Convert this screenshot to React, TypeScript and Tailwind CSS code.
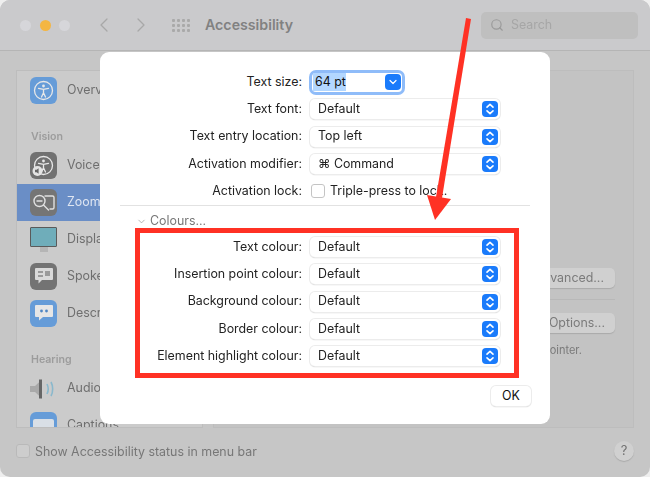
import React from 'react';
import { ChevronLeft, ChevronRight, ChevronDown, Search } from 'lucide-react';

const UpDown = () => (
  <svg width="16" height="16" viewBox="0 0 16 16" fill="none" stroke="white" strokeWidth="1.6" strokeLinecap="round" strokeLinejoin="round">
    <path d="M5 6.2 8 3.4l3 2.8" />
    <path d="M5 9.8l3 2.8 3-2.8" />
  </svg>
);

const Select = ({ value }: { value: string }) => (
  <div className="w-[190px] h-[20px] flex items-center justify-between bg-white rounded-[5px] pl-2 pr-[2px] shadow-[0_0_0_1px_#ececec,0_1px_1px_#b0b0b0]">
    <span className="text-[12.4px] text-[#222]">{value}</span>
    <span className="w-[16px] h-[16px] rounded-[4px] bg-[#1a7bfb] flex items-center justify-center">
      <UpDown />
    </span>
  </div>
);

const Row = ({ label, children }: { label: string; children: React.ReactNode }) => (
  <div className="h-[27.3px] flex items-center">
    <div className="w-[210px] text-right text-[12.4px] text-[#222] pr-[8px] shrink-0">{label}</div>
    {children}
  </div>
);

const AppIcon = ({ bg, children }: { bg: string; children?: React.ReactNode }) => (
  <div className={`w-[27px] h-[27px] rounded-[6px] flex items-center justify-center shrink-0 ${bg}`}>{children}</div>
);

const PersonCircle = ({ badge }: { badge?: boolean }) => (
  <svg width="23" height="23" viewBox="0 0 23 23" fill="none" stroke="#e8e8e8" strokeWidth="1.3" strokeLinecap="round">
    <circle cx="11.5" cy="11.5" r="9" />
    <circle cx="11.5" cy="7" r="1.4" fill="#e8e8e8" stroke="none" />
    <path d="M6.5 9.3l5 1 5-1M11.5 10.3v3.5M11.5 13.8l-2 4.2M11.5 13.8l2 4.2" />
    {badge && (
      <g>
        <circle cx="5.5" cy="17" r="5" fill="#e4e4e4" stroke="none" />
        <path d="M3 15.8h1.6l2-1.6v5.6l-2-1.6H3z" fill="#666" stroke="none" />
      </g>
    )}
  </svg>
);

const SideItem = ({ icon, label, active }: { icon: React.ReactNode; label: string; active?: boolean }) => (
  <div className={`h-[37px] flex items-center pl-[13px] gap-[10px] ${active ? 'bg-[#6a8ec6]' : ''}`}>
    {icon}
    <span className={`text-[12.4px] ${active ? 'text-[#dfe6f2]' : 'text-[#6e6e6e]'}`}>{label}</span>
  </div>
);

const SideHeading = ({ label }: { label: string }) => (
  <div className="h-[20px] pl-[14px] flex items-center text-[10.6px] font-semibold text-[#9c9c9c]">{label}</div>
);

export default function App() {
  return (
    <div className="relative w-[650px] h-[477px] bg-[#efefef] overflow-hidden font-['Inter','Liberation_Sans',sans-serif]">
      <div className="w-full h-full blur-[0.35px]">
        {/* window behind the sheet */}
        <div className="w-full h-full bg-[#c6c6c6] rounded-[10px] overflow-hidden flex flex-col">
          <div className="h-[51px] shrink-0 bg-[#cacacc] border-b border-[#b5b5b5] flex items-center pl-[20px] pr-[12px]">
            <div className="flex gap-[8.5px]">
              <span className="w-[11px] h-[11px] rounded-full bg-[#d6d6da]" />
              <span className="w-[11px] h-[11px] rounded-full bg-[#f4b642]" />
              <span className="w-[11px] h-[11px] rounded-full bg-[#d6d6da]" />
            </div>
            <ChevronLeft className="ml-[22px] text-[#a8a8a8]" size={24} strokeWidth={1.3} />
            <ChevronRight className="ml-[13px] text-[#a8a8a8]" size={24} strokeWidth={1.3} />
            <div className="ml-[19px] grid grid-cols-4 gap-[2px]">
              {Array.from({ length: 12 }).map((_, i) => (
                <span key={i} className="w-[3px] h-[3px] bg-[#a9a9a9] rounded-[1px]" />
              ))}
            </div>
            <span className="ml-[15px] text-[14.2px] font-semibold text-[#818181]">Accessibility</span>
            <div className="ml-auto w-[157px] h-[27px] rounded-[5px] bg-[#bfbfbf] flex items-center pl-[9px] gap-[7px]">
              <Search size={14} className="text-[#9a9a9a]" />
              <span className="text-[12.4px] text-[#a6a6a6]">Search</span>
            </div>
          </div>

          <div className="flex-1 flex gap-[10px] px-[16px] pt-[19px] min-h-0">
            <div className="w-[187px] h-[358px] bg-[#cbcbcb] border border-[#bdbdbd] overflow-hidden shrink-0 pt-[1px]">
              <SideItem label="Overview" icon={<AppIcon bg="bg-[#669cd8]"><PersonCircle /></AppIcon>} />
              <div className="h-[37.5px] flex items-end"><div className="w-full"><SideHeading label="Vision" /></div></div>
              <SideItem label="VoiceOver" icon={<AppIcon bg="bg-[#717171]"><PersonCircle badge /></AppIcon>} />
              <SideItem
                active
                label="Zoom"
                icon={
                  <AppIcon bg="bg-[#757575]">
                    <svg width="23" height="19" viewBox="0 0 23 19" fill="none" stroke="#e0e0e0" strokeWidth="1.4" strokeLinecap="round">
                      <path d="M13 3h7.5a1.5 1.5 0 0 1 1.5 1.5v10a1.5 1.5 0 0 1-1.5 1.5H18" />
                      <circle cx="7.5" cy="8" r="5.5" />
                      <path d="M5 8h5M11.5 12l5 5" />
                    </svg>
                  </AppIcon>
                }
              />
              <SideItem
                label="Display"
                icon={
                  <div className="w-[27px] flex flex-col items-center shrink-0">
                    <div className="w-[27px] h-[20px] bg-[#6fadba] border border-[#5a5a5a] rounded-[1px]" />
                    <div className="w-[8px] h-[5px] bg-[#b5b5b5]" />
                  </div>
                }
              />
              <SideItem
                label="Spoken Content"
                icon={
                  <AppIcon bg="bg-[#737373]">
                    <svg width="20" height="18" viewBox="0 0 20 18" fill="#d9d9d9">
                      <path d="M2 1h16a1 1 0 0 1 1 1v10a1 1 0 0 1-1 1H8l-3.5 3.5V13H2a1 1 0 0 1-1-1V2a1 1 0 0 1 1-1z" />
                      <path d="M4 4h5v2H4zM11 4h5v5h-5zM4 8h5v2H4z" fill="#9a9a9a" />
                    </svg>
                  </AppIcon>
                }
              />
              <SideItem
                label="Descriptions"
                icon={
                  <AppIcon bg="bg-[#669cd8]">
                    <svg width="20" height="18" viewBox="0 0 20 18" fill="#e6e6e6">
                      <path d="M2 1h16a1 1 0 0 1 1 1v10a1 1 0 0 1-1 1H9l-4 3.5V13H2a1 1 0 0 1-1-1V2a1 1 0 0 1 1-1z" />
                      <circle cx="7.5" cy="7" r="1.4" fill="#4f86c4" />
                      <circle cx="12.5" cy="7" r="1.4" fill="#4f86c4" />
                    </svg>
                  </AppIcon>
                }
              />
              <div className="h-[38.5px] flex items-end"><div className="w-full"><SideHeading label="Hearing" /></div></div>
              <SideItem
                label="Audio"
                icon={
                  <svg width="27" height="24" viewBox="0 0 27 24" className="shrink-0">
                    <path d="M0 9h5l7-6.5v19L5 15H0z" fill="#a9a9a9" />
                    <path d="M9 2.5h3v19H9z" fill="#666" />
                    <path d="M17 7c1.5 3 1.5 7 0 10M21 5c2.2 4 2.2 10 0 14" fill="none" stroke="#8ab8cc" strokeWidth="1.6" />
                  </svg>
                }
              />
              <SideItem
                label="Captions"
                icon={
                  <AppIcon bg="bg-[#669cd8]">
                    <div className="w-[21px] h-[17px] mt-[4px] rounded-[2px] bg-[#d9dfe6]" />
                  </AppIcon>
                }
              />
            </div>

            <div className="flex-1 h-[358px] bg-[#c3c3c3] border border-[#bdbdbd] flex flex-col items-end pr-[18px] pt-[197px]">
              <div className="h-[20px] w-[90px] rounded-[5px] bg-[#d0d0d0] shadow-[0_1px_1px_#aaaaaa] text-[12.4px] text-[#7a7a7a] flex items-center justify-end pr-[11px]">Advanced...</div>
              <div className="w-full h-px bg-[#b8b8b8] mt-[11px]" />
              <div className="h-[20px] w-[90px] rounded-[5px] bg-[#d0d0d0] shadow-[0_1px_1px_#aaaaaa] text-[12.4px] text-[#7a7a7a] flex items-center justify-end pr-[10px] mt-[13px]">Options...</div>
              <div className="text-[11px] text-[#7a7a7a] mt-[9px] pr-[33px]">pointer.</div>
            </div>
          </div>

          <div className="h-[49px] shrink-0 flex items-start pl-[16px] pr-[16px] gap-[5px]">
            <span className="w-[14px] h-[14px] mt-[16px] rounded-[3px] bg-[#cdcdcd] border border-[#b9b9b9]" />
            <span className="text-[12.4px] text-[#777] mt-[15px]">Show Accessibility status in menu bar</span>
            <span className="ml-auto mt-[13px] w-[20px] h-[20px] rounded-full bg-[#d0d0d0] shadow-[0_1px_1px_#aaaaaa] text-[13px] text-[#707070] flex items-center justify-center">?</span>
          </div>
        </div>

        {/* sheet */}
        <div className="absolute left-[100px] top-[52px] w-[450px] h-[372px] bg-white rounded-[9px] pt-[16.5px]">
          <Row label="Text size:">
            <div className="w-[90px] h-[19px] ml-[2px] flex items-center justify-between bg-white rounded-[4px] pr-[1px] shadow-[0_0_0_3px_#8fbcf9]">
              <span className="text-[12.4px] text-[#111] bg-[#b3d7ff] ml-[1px] pl-[2px] w-[33px] whitespace-nowrap">64 pt</span>
              <span className="w-[16px] h-[16px] rounded-[4px] bg-[#1a7bfb] flex items-center justify-center">
                <ChevronDown size={12} strokeWidth={2.4} className="text-white" />
              </span>
            </div>
          </Row>
          <Row label="Text font:"><Select value="Default" /></Row>
          <Row label="Text entry location:"><Select value="Top left" /></Row>
          <Row label="Activation modifier:"><Select value="⌘ Command" /></Row>
          <Row label="Activation lock:">
            <span className="w-[14px] h-[14px] ml-[1px] rounded-[3px] bg-white border border-[#c4c4c4]" />
            <span className="ml-[5px] text-[12.4px] text-[#222]">Triple-press to lock.</span>
          </Row>

          <div className="h-px bg-[#e2e2e2] mx-[20px]" />
          <div className="h-[21px] mt-[5px] pl-[36px] flex items-center gap-[3px] text-[12.4px] text-[#777]">
            <ChevronDown size={11} strokeWidth={1.6} className="text-[#999]" />
            Colours...
          </div>

          <div className="ml-[35px] w-[384px] h-[150px] border-[5px] border-[#ff3124] -mt-[4px] pt-[0.5px]">
            <div className="-ml-[40px]">
              <Row label="Text colour:"><Select value="Default" /></Row>
              <Row label="Insertion point colour:"><Select value="Default" /></Row>
              <Row label="Background colour:"><Select value="Default" /></Row>
              <Row label="Border colour:"><Select value="Default" /></Row>
              <Row label="Element highlight colour:"><Select value="Default" /></Row>
            </div>
          </div>

          <div className="flex justify-end pr-[19px] mt-[8px]">
            <div className="w-[40px] h-[20px] bg-white rounded-[5px] shadow-[0_0_0_1px_#ececec,0_1px_1px_#b0b0b0] text-[12.4px] text-[#111] flex items-center justify-center">OK</div>
          </div>
        </div>

        {/* arrow annotation */}
        <svg className="absolute left-0 top-0 pointer-events-none" width="650" height="477" viewBox="0 0 650 477">
          <path d="M466 18 471 19 442 198 436 197z" fill="#ff3124" />
          <path d="M427 195 451 199 435 220z" fill="#ff3124" />
        </svg>
      </div>
    </div>
  );
}
